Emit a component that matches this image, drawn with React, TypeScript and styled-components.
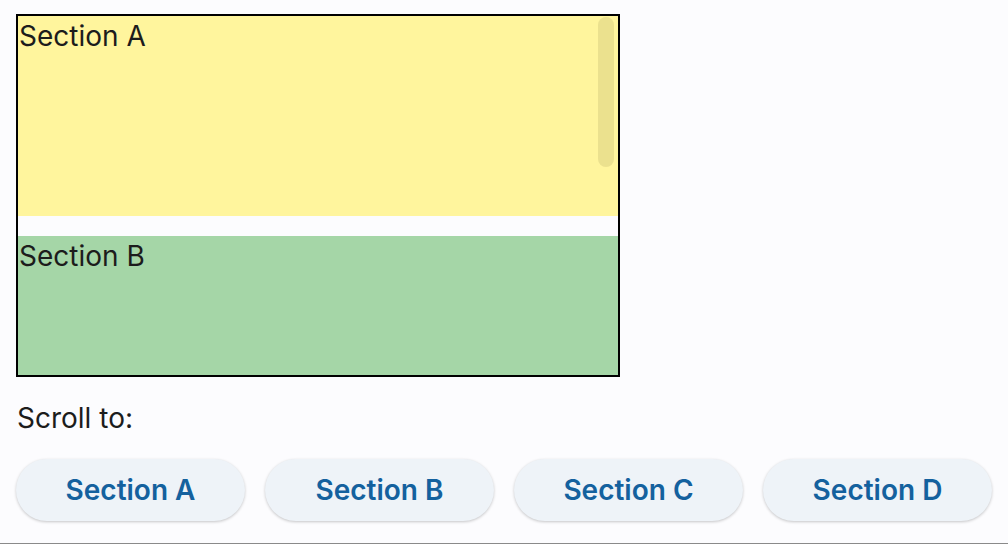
import React from 'react';
import styled, { createGlobalStyle } from 'styled-components';

const GlobalStyle = createGlobalStyle`
    html, body {
        margin: 0;
        padding: 0;
        background-color: #fcfcfe;
    }

    body {
        font-family: Inter, "Noto Sans", sans-serif;
        color: #1c1c1c;
    }
`;

const Page = styled.div`
    box-sizing: border-box;
    height: 544px;
    padding: 14px 16px 0 16px;
    border-bottom: 1px solid #8a8a8a;
    overflow: hidden;
`;

const Frame = styled.div`
    position: relative;
    width: 600px;
    border: 2px solid #000;
`;

const Scroller = styled.div`
    height: 359px;
    overflow-y: scroll;
    scrollbar-width: none;

    &::-webkit-scrollbar {
        display: none;
    }
`;

const Thumb = styled.div`
    position: absolute;
    top: 1px;
    right: 4px;
    width: 16px;
    height: 150px;
    border-radius: 8px;
    background-color: rgba(90, 80, 40, 0.12);
`;

const Section = styled.div<{ $bg: string }>`
    height: 200px;
    margin-bottom: 20px;
    background-color: ${props => props.$bg};
    font-size: 28px;
    line-height: 40px;
    padding-left: 1px;

    &:last-child {
        margin-bottom: 0;
    }
`;

const Label = styled.div`
    margin-top: 24px;
    font-size: 28px;
    line-height: 34px;
    padding-left: 1px;
`;

const ButtonRow = styled.div`
    display: flex;
    gap: 20px;
    margin-top: 24px;
`;

const Button = styled.button`
    width: 229px;
    height: 62px;
    border: none;
    border-radius: 31px;
    background-color: #eef3f8;
    box-shadow: 0 1px 3px rgba(0, 0, 0, 0.22);
    color: #14619e;
    font-family: Inter, "Noto Sans", sans-serif;
    font-size: 28px;
    font-weight: 600;
    cursor: pointer;
`;

const sections = [
    { id: 'A', bg: '#fff59d' },
    { id: 'B', bg: '#a5d6a7' },
    { id: 'C', bg: '#90caf9' },
    { id: 'D', bg: '#f48fb1' },
];

const App: React.FC = () => {
    return (
        <>
            <GlobalStyle />
            <Page>
                <Frame>
                    <Scroller>
                        {sections.map(s => (
                            <Section key={s.id} $bg={s.bg}>Section {s.id}</Section>
                        ))}
                    </Scroller>
                    <Thumb />
                </Frame>
                <Label>Scroll to:</Label>
                <ButtonRow>
                    {sections.map(s => (
                        <Button key={s.id}>Section {s.id}</Button>
                    ))}
                </ButtonRow>
            </Page>
        </>
    );
};

export default App
